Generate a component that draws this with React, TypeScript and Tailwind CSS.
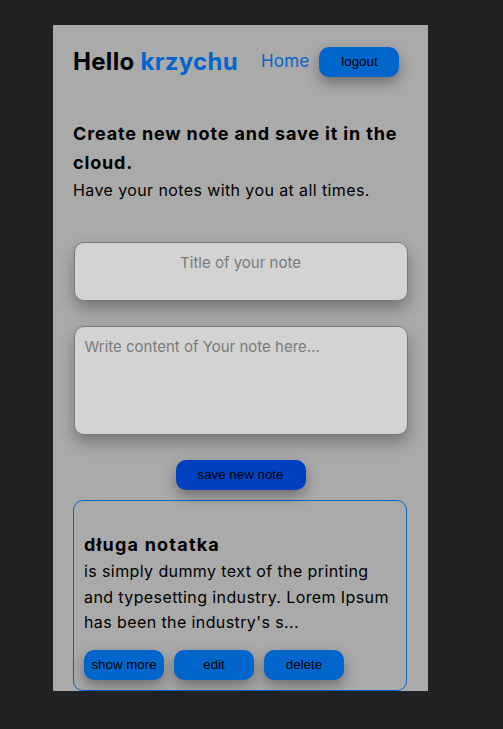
import React from "react";

export default function App() {
  return (
    <div className="min-h-[729px] w-full bg-[#202123] pt-[25px] pl-[53px]">
      <div className="w-[375px] h-[666px] overflow-hidden bg-[#aaaaaa] px-5 pt-[22px] text-black font-['Inter','Open_Sans',sans-serif]">
        <header className="flex items-center h-[30px]">
          <h1 className="text-[24px] font-bold leading-none tracking-[0.3px]">
            Hello <span className="text-[#0066cc]">krzychu</span>
          </h1>
          <a className="ml-[23px] text-[17px] tracking-[0.2px] text-[#0066cc]">Home</a>
          <button className="ml-[10px] w-[80px] h-[30px] rounded-[10px] bg-[#0066cc] text-[13.33px] font-['Liberation_Sans',Arial,sans-serif] text-black shadow-[0_6px_14px_rgba(0,0,0,0.35)]">
            logout
          </button>
        </header>

        <section className="mt-[42px]">
          <h2 className="text-[18px] font-bold leading-[29px] tracking-[0.85px]">
            Create new note and save it in the cloud.
          </h2>
          <p className="text-[16px] leading-[26px] tracking-[0.4px]">Have your notes with you at all times.</p>
        </section>

        <form className="mt-[39px] flex flex-col items-center">
          <textarea
            placeholder="Title of your note"
            className="w-[334px] h-[59px] resize-none rounded-[10px] border border-[#7a7a7a] bg-[#d3d3d3] px-2.5 pt-[7px] text-center text-[15px] leading-[26px] placeholder:text-[#7a7a7a] shadow-[0_8px_16px_rgba(0,0,0,0.3)] outline-none"
          />
          <textarea
            placeholder="Write content of Your note here..."
            className="mt-[25px] w-[334px] h-[109px] resize-none rounded-[10px] border border-[#7a7a7a] bg-[#d3d3d3] px-2.5 pt-[7px] text-[15px] leading-[26px] placeholder:text-[#7a7a7a] shadow-[0_8px_16px_rgba(0,0,0,0.3)] outline-none"
          />
          <button
            type="button"
            className="mt-[25px] w-[130px] h-[30px] rounded-[10px] bg-[#0041c2] text-[13.33px] font-['Liberation_Sans',Arial,sans-serif] text-black shadow-[0_6px_14px_rgba(0,0,0,0.35)]"
          >
            save new note
          </button>
        </form>

        <article className="mt-[10px] w-[334px] rounded-[10px] border border-[#0066cc] px-2.5 pt-[30px] pb-[10px]">
          <h3 className="text-[18px] font-bold leading-[28px] tracking-[1.2px]">długa notatka</h3>
          <p className="text-[16px] leading-[25.5px] tracking-[0.4px]">
            is simply dummy text of the printing and typesetting industry. Lorem Ipsum has been the industry's s...
          </p>
          <div className="mt-[14px] flex gap-[10px]">
            {["show more", "edit", "delete"].map((t) => (
              <button
                key={t}
                className="w-[80px] h-[30px] rounded-[10px] bg-[#0066cc] text-[13.33px] font-['Liberation_Sans',Arial,sans-serif] text-black shadow-[0_6px_14px_rgba(0,0,0,0.35)]"
              >
                {t}
              </button>
            ))}
          </div>
        </article>
      </div>
    </div>
  );
}
